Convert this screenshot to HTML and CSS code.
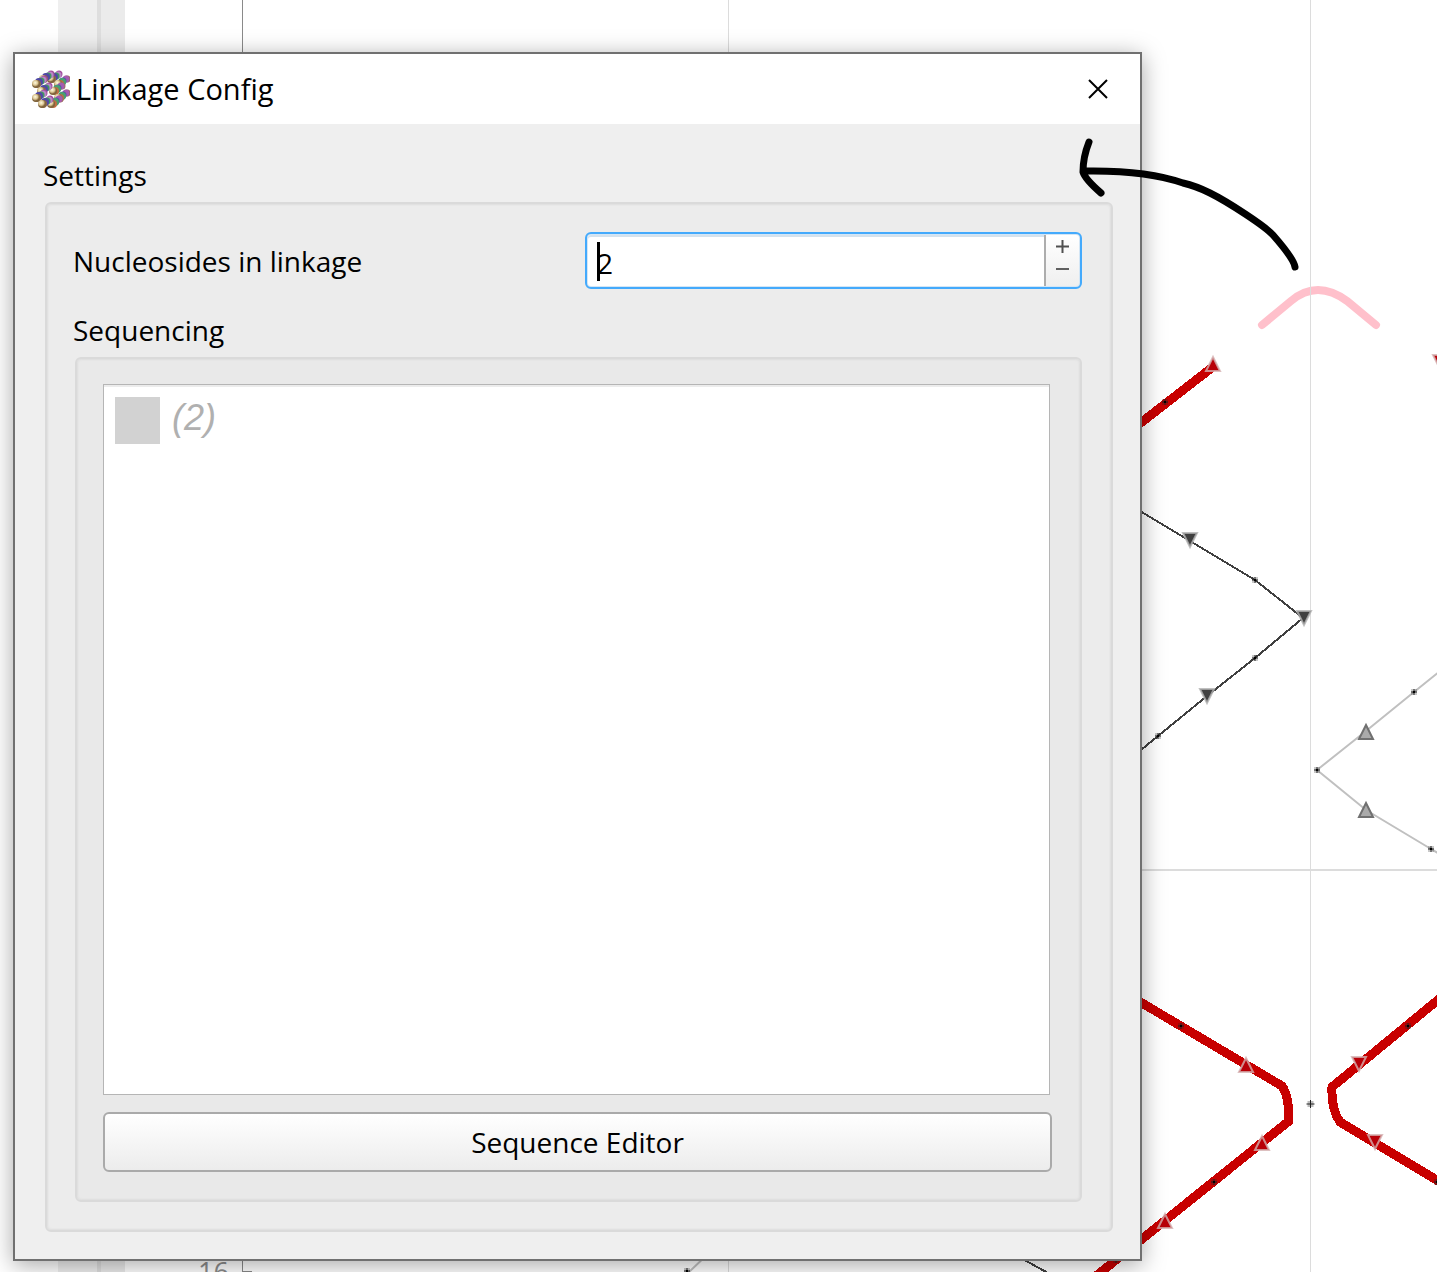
FILE: index.html
```html
<!DOCTYPE html>
<html lang="en">
<head>
<meta charset="utf-8">
<title>Linkage Config</title>
<link rel="stylesheet" href="styles.css">
</head>
<body>
<div class="workspace">
  <!-- Plot canvas behind the dialog -->
  <svg class="plot" aria-hidden="true">
    <defs>
      <g id="dot"><rect x="-3" y="-3" width="6" height="6" fill="#222" fill-opacity=".25"/><path d="M-3-1h6v2h-6zM-1-3h2v6h-2z" fill="#222" fill-opacity=".5"/><path d="M-1-1h2v2h-2z" fill="#000"/></g>
      <g id="cross"><rect x="-3" y="-3" width="6" height="6" fill="#bbb"/><path d="M-4 0h8M0-4v8" stroke="#222" stroke-width="1"/></g>
      <path id="tri-up" d="M0-7L7 7H-7Z"/>
      <path id="tri-down" d="M0 7L7-7H-7Z"/>
    </defs>
    <rect x="58" width="67" height="100%" fill="#efefef"/>
    <rect x="101" width="24" height="100%" fill="#ebebeb"/>
    <rect x="97" width="4" height="100%" fill="#dedede"/>
    <path class="axis" d="M242.500 0V1272M243 1271.500h9"/>
    <text class="tick" x="198" y="1282">16</text>

    <path d="M1262 325L1291 301Q1304 290 1318 290T1347 301L1376 325" fill="none" stroke="#ffc0cb" stroke-width="8" stroke-linecap="round"/>
    <g fill="#dcdcdc">
      <rect x="728" width="1" height="100%"/>
      <rect x="1310" width="1" height="100%"/>
      <rect x="728" y="869" width="100%" height="2"/>
    </g>

    <g class="dark-strand">
      <path d="M1130 505L1190 541L1255 580L1303 618L1255 658L1207 696L1158 736L1130 759M1010 1252L1048 1273"/>
    </g>
    <g class="light-strand">
      <path d="M1440 671L1414 692L1366 731L1317 770L1366 810L1431 849L1450 860M710 1252L688 1273"/>
    </g>
    <g class="red-strand">
      <path d="M1120 439L1214 366"/>
      <path d="M1120 990L1282 1086Q1289 1096 1289 1121L1213 1182L1096 1276"/>
      <path d="M1450 990L1332 1087Q1331 1109 1340 1122L1450 1188"/>
    </g>

    <g class="mark-dark">
      <use href="#tri-down" x="1190" y="540"/>
      <use href="#tri-down" x="1304" y="618"/>
      <use href="#tri-down" x="1207" y="696"/>
    </g>
    <g class="mark-light">
      <use href="#tri-up" x="1366" y="732"/>
      <use href="#tri-up" x="1366" y="810"/>
    </g>
    <g class="mark-red">
      <use href="#tri-up" x="1213" y="364"/>
      <use href="#tri-down" x="1440" y="362"/>
      <use href="#tri-up" x="1246" y="1065"/>
      <use href="#tri-up" x="1262" y="1143"/>
      <use href="#tri-up" x="1165" y="1221"/>
      <use href="#tri-down" x="1359" y="1064"/>
      <use href="#tri-down" x="1375" y="1142"/>
    </g>
    <use href="#dot" x="1165" y="402"/>
    <use href="#dot" x="1255" y="580"/>
    <use href="#dot" x="1255" y="658"/>
    <use href="#dot" x="1158" y="736"/>
    <use href="#dot" x="1414" y="692"/>
    <use href="#dot" x="1317" y="770"/>
    <use href="#dot" x="1431" y="849"/>
    <use href="#dot" x="1181" y="1026"/>
    <use href="#dot" x="1214" y="1182"/>
    <use href="#dot" x="1116" y="1260"/>
    <use href="#dot" x="1408" y="1026"/>
    <use href="#dot" x="1437" y="1182"/>
    <use href="#dot" x="687" y="1271"/>
    <use href="#cross" x="1310.500" y="1104"/>
  </svg>

  <main class="dialog" role="dialog" aria-labelledby="dialog-title">
    <header class="titlebar">
      <svg class="app-icon" viewBox="0 0 39 39" aria-hidden="true">
        <defs>
          <radialGradient id="end" cx=".4" cy=".35"><stop offset="0" stop-color="#fffbe0"/><stop offset=".6" stop-color="#dcc795"/><stop offset="1" stop-color="#80643c"/></radialGradient>
          <g id="tube-a">
            <circle cx="8" cy="-5" r="3.500" fill="#a24a9c"/><circle cx="7" cy="-4" r="3.500" fill="#b888c4"/><circle cx="5" cy="-3" r="3.500" fill="#3f9a62"/><circle cx="3" cy="-2" r="4" fill="#5048a4"/><circle cx="1" cy="0" r="4" fill="#8d6a4a"/><circle r="4" fill="url(#end)"/>
          </g>
          <g id="tube-b">
            <circle cx="9" cy="-5" r="3.500" fill="#99705c"/><circle cx="8" cy="-5" r="3.500" fill="#a55bb0"/><circle cx="5" cy="-3" r="3.500" fill="#4d56a8"/><circle cx="4" cy="-2" r="4" fill="#48a070"/><circle cx="2" cy="0" r="4" fill="#c06c42"/><circle r="4" fill="url(#end)"/>
          </g>
        </defs>
        <use href="#tube-a" x="20" y="9"/><use href="#tube-a" x="12" y="9"/><use href="#tube-a" x="5" y="14"/>
        <use href="#tube-b" x="27" y="14"/><use href="#tube-b" x="22" y="21"/>
        <use href="#tube-a" x="10" y="21"/><use href="#tube-b" x="27" y="28"/><use href="#tube-a" x="5" y="28"/>
        <use href="#tube-b" x="20" y="34"/><use href="#tube-a" x="11" y="34"/>
      </svg>
      <h1 class="title" id="dialog-title">Linkage Config</h1>
      <button class="close" type="button" aria-label="Close">
        <svg width="20" height="20" viewBox="0 0 20 20" aria-hidden="true"><path d="M1 1L19 19M19 1L1 19" stroke="#000" stroke-width="2"/></svg>
      </button>
    </header>

    <form class="content">
      <h2 class="group-label">Settings</h2>
      <section class="group group-outer">
        <div class="field">
          <label for="nucleosides">Nucleosides in linkage</label>
          <div class="spinbox">
            <input class="spin-input" id="nucleosides" type="text" inputmode="numeric" value="2">
            <span class="caret"></span>
            <div class="spin-buttons">
              <button type="button" aria-label="Increase"><svg width="13" height="13" viewBox="0 0 13 13"><path d="M0 6.500H13M6.500 0V13" stroke="#505050" stroke-width="2"/></svg></button>
              <button type="button" aria-label="Decrease"><svg width="13" height="13" viewBox="0 0 13 13"><path d="M0 6H13" stroke="#606060" stroke-width="2"/></svg></button>
            </div>
          </div>
        </div>
        <h2 class="group-label">Sequencing</h2>
        <section class="group group-inner">
          <ul class="sequence-list">
            <li><span class="swatch"></span><span class="count">(2)</span></li>
          </ul>
          <button class="editor-button" type="button">Sequence Editor</button>
        </section>
      </section>
    </form>
  </main>

  <!-- Hand-drawn arrow over the dialog -->
  <svg class="annotation" aria-hidden="true">
    <path d="M1295 267Q1294 259 1273 235C1265 226 1228 202 1210 193Q1196 186 1183 183Q1146 170 1085 171M1089 142C1085 152 1083 160 1083 172Q1085 179 1101 193"/>
  </svg>
</div>
</body>
</html>
```

FILE: styles.css
```css
* {
  box-sizing: border-box;
}

body {
  margin: 0;
  background: #fff;
  color: #000;
  font: 28px/40px "Open Sans", "Noto Sans", sans-serif;
}

.workspace {
  position: relative;
  display: flex;
  min-height: 100vh;
  padding: 52px 295px 11px 13px;
  overflow: hidden;
}

.plot,
.annotation {
  position: absolute;
  inset: 0;
  width: 100%;
  height: 100%;
}

.annotation {
  pointer-events: none;
  fill: none;
  stroke: #000;
  stroke-width: 7px;
  stroke-linecap: round;
  stroke-linejoin: round;
}

.axis {
  fill: none;
  stroke: #8a8a8a;
}

.tick {
  fill: #8c8c8c;
  font-size: 27px;
}

.dark-strand {
  fill: none;
  stroke: #404040;
  stroke-width: 2px;
  shape-rendering: crispEdges;
}

.light-strand {
  fill: none;
  stroke: #c0c0c0;
  stroke-width: 2px;
}

.red-strand {
  fill: none;
  stroke: #c80000;
  stroke-width: 9px;
  stroke-linejoin: round;
  shape-rendering: crispEdges;
}

.mark-dark {
  fill: #404040;
  stroke: #b0b0b0;
  stroke-opacity: 0.8;
  stroke-width: 2px;
}

.mark-light {
  fill: #aaa;
  stroke: #707070;
  stroke-width: 2px;
}

.mark-red {
  fill: #b80008;
  stroke: #d4b0b0;
  stroke-opacity: 0.8;
  stroke-width: 2px;
}

.dialog {
  position: relative;
  display: flex;
  flex: 1;
  flex-direction: column;
  border: 2px solid #707070;
  background: #efefef;
  box-shadow: 0 4px 22px rgba(0, 0, 0, 0.35);
}

.titlebar {
  display: flex;
  align-items: center;
  height: 70px;
  padding: 0 32px 0 16px;
  background: #fff;
}

.app-icon {
  width: 39px;
  height: 39px;
}

.title {
  flex: 1;
  margin: 0 0 0 6px;
  font-size: 29px;
  font-weight: 400;
}

.close {
  display: flex;
  padding: 0;
  border: 0;
  background: none;
}

.content {
  display: flex;
  flex: 1;
  flex-direction: column;
  padding: 31px 27px 27px 28px;
}

.group-label {
  margin: 0;
  font-size: 28px;
  font-weight: 400;
}

.group {
  display: flex;
  flex: 1;
  flex-direction: column;
  border: 2px solid #dadada;
  border-radius: 6px;
  box-shadow: inset 0 0 2px 1px #dedede;
}

.group-outer {
  margin: 7px 0 0 2px;
  padding: 28px 29px 28px 26px;
  background: #ececec;
}

.group-inner {
  gap: 17px;
  margin: 7px 0 0 2px;
  padding: 25px 28px 28px 26px;
  background: #e9e9e9;
}

.field {
  display: grid;
  grid-template-columns: 512fr 497fr;
  align-items: center;
  margin-bottom: 21px;
}

.spinbox {
  position: relative;
  display: flex;
  height: 57px;
  padding: 1px;
  border: 2px solid #44aafc;
  border-radius: 6px;
  background: #d4e6f5;
}

.spin-input {
  flex: 1;
  min-width: 0;
  padding: 4px 0 0 9px;
  border: 0;
  border-radius: 3px 0 0 3px;
  outline: 0;
  background: #fff;
  box-shadow: inset 0 2px #d4e2ee;
  color: #000;
  font: inherit;
}

.caret {
  position: absolute;
  top: 8px;
  left: 10px;
  width: 3px;
  height: 39px;
  background: #000;
}

.spin-buttons {
  display: flex;
  flex-direction: column;
  align-items: center;
  justify-content: center;
  gap: 10px;
  width: 35px;
  padding-bottom: 5px;
  border-left: 2px solid #adadad;
  border-radius: 0 3px 3px 0;
  background: linear-gradient(#fff, #efefef);
}

.spin-buttons button {
  display: flex;
  padding: 0;
  border: 0;
  background: none;
}

.sequence-list {
  flex: 1;
  margin: 0 2px 0 0;
  padding: 10px 11px;
  border: 1px solid #b5b5b5;
  background: #fff;
  box-shadow: inset 0 2px #ececec;
  list-style: none;
}

.sequence-list li {
  display: flex;
  gap: 12px;
}

.swatch {
  width: 45px;
  height: 47px;
  margin-top: 2px;
  background: #d2d2d2;
}

.count {
  color: #b0b0b0;
  font: italic 36px/46px "Liberation Sans", Arial, sans-serif;
}

.editor-button {
  height: 60px;
  padding: 0;
  border: 2px solid #aaa;
  border-radius: 6px;
  background: linear-gradient(#fff, #ececec);
  color: #000;
  font: inherit;
}
```
